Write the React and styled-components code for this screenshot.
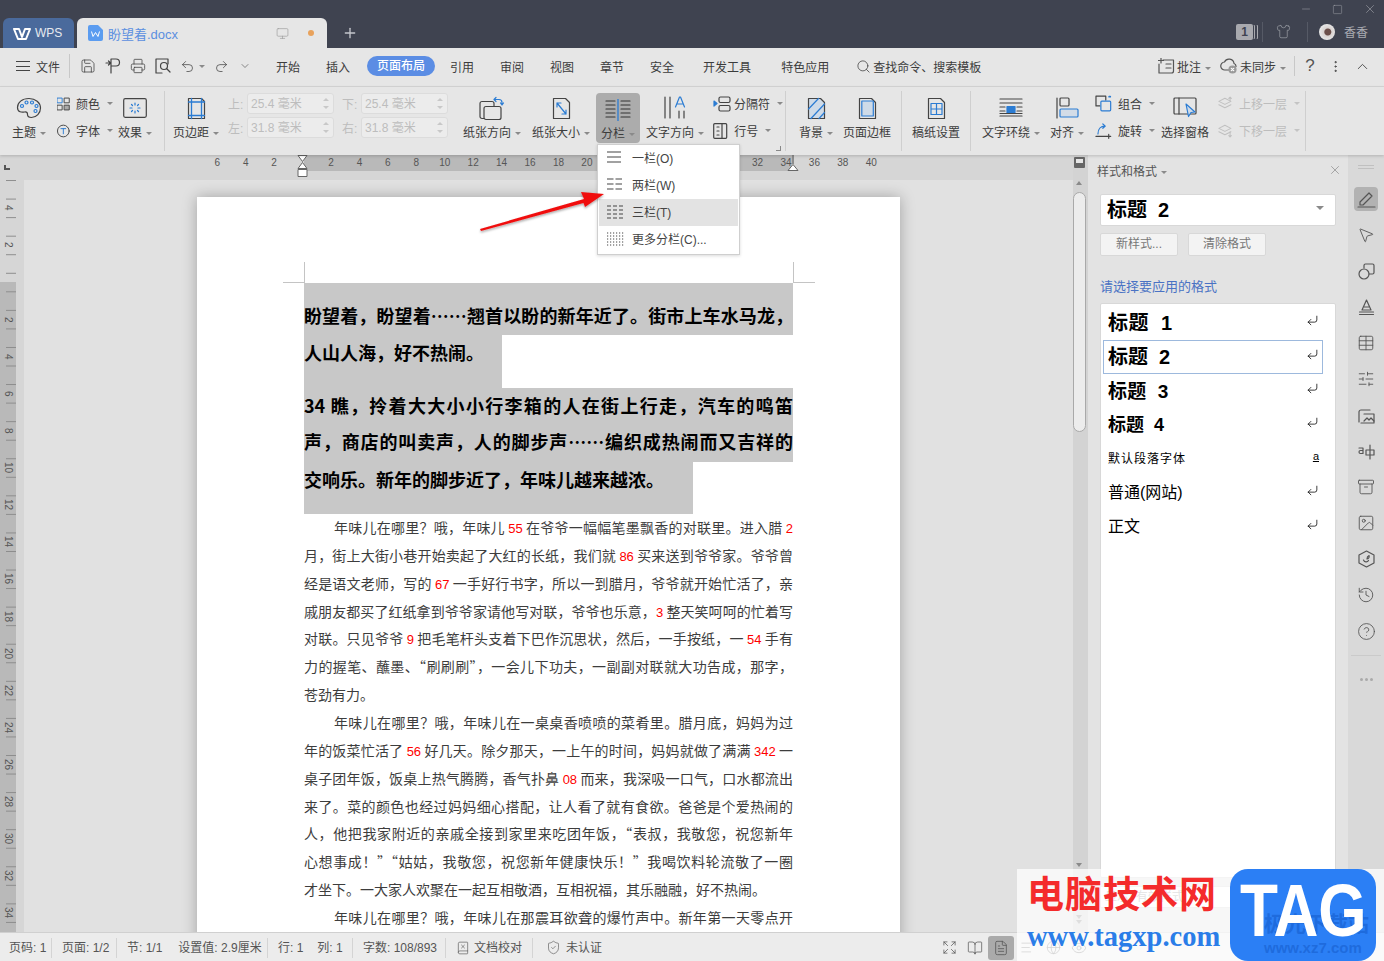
import React from 'react'
import styled, {createGlobalStyle} from 'styled-components'
import {
    Save, Printer, Undo2, Redo2, ChevronDown, ChevronUp, Search, MoreVertical, Minus, Square, X, Plus,
    Monitor, Shirt, HelpCircle, MousePointer2, Table, SlidersHorizontal, Archive, Image, History,
    Expand, BookOpen, FileText, AlignLeft, Globe, Eye, ShieldCheck, CornerDownLeft, BookX
} from 'lucide-react'

const FONT = '"Liberation Sans", "Noto Sans CJK SC", sans-serif'
const BLUE = '#2b7cd3'
const INK = '#3c3c3c'

const GlobalStyle = createGlobalStyle`
    html, body {
        margin: 0;
        padding: 0;
        width: 1384px;
        height: 961px;
        overflow: hidden;
        background: #e6e6e6;
    }
    body {
        font-family: ${FONT};
    }
    * {
        box-sizing: border-box;
    }
`

const Page = styled.div`
    position: relative;
    width: 1384px;
    height: 961px;
    display: flex;
    flex-direction: column;
    overflow: hidden;
    font-size: 12px;
    color: #333;
`

/* ---------- title bar ---------- */

const TitleBar = styled.div`
    height: 48px;
    flex: none;
    background: #3f4350;
    display: flex;
    align-items: flex-end;
    padding-left: 3px;
`

const WpsTab = styled.div`
    width: 71px;
    height: 30px;
    background: #4a6a9c;
    border-radius: 6px 6px 0 0;
    color: #e6e9ef;
    font-size: 12px;
    display: flex;
    align-items: center;
    gap: 4px;
    padding-left: 10px;
`

const DocTab = styled.div`
    width: 250px;
    height: 30px;
    margin-left: 3px;
    background: #e6e6e6;
    border-radius: 6px 6px 0 0;
    color: #5b8fe0;
    font-size: 13px;
    display: flex;
    align-items: center;
    padding-left: 11px;
    gap: 5px;
`

const TabName = styled.span`
    flex: 1;
`

const UnsavedDot = styled.i`
    width: 6px;
    height: 6px;
    border-radius: 50%;
    background: #e8a25c;
    margin: 0 13px 0 14px;
`

const NewTab = styled.div`
    width: 46px;
    height: 30px;
    display: flex;
    align-items: center;
    justify-content: center;
    color: #c4c6cc;
`

const TitleRight = styled.div`
    margin-left: auto;
    height: 48px;
    display: flex;
    flex-direction: column;
    align-items: flex-end;
    color: #a9abb2;
`

const WindowButtons = styled.div`
    display: flex;
    height: 18px;
    align-items: center;
    gap: 20px;
    padding-right: 7px;
`

const Account = styled.div`
    display: flex;
    align-items: center;
    height: 30px;
    padding: 0 16px 3px 0;
    font-size: 12px;
`

const CountBadge = styled.div`
    width: 17px;
    height: 16px;
    border-radius: 2px;
    background: #a8a9ae;
    color: #3f4350;
    font-weight: bold;
    font-size: 12px;
    text-align: center;
    line-height: 16px;
    margin-right: 1px;
    box-shadow: 2px 0 0 -1px #3f4350, 3px 0 0 -1px #a8a9ae, 5px 0 0 -1px #3f4350, 6px 0 0 -1px #a8a9ae;
`

const TitleSep = styled.i`
    width: 1px;
    height: 20px;
    background: #565a66;
    margin: ${p => p.$m};
`

const Avatar = styled.div`
    width: 16px;
    height: 16px;
    border-radius: 50%;
    background: radial-gradient(circle at 55% 50%, #6b4f4a 0 3px, #d8d2d0 4px, #e6e6e6 8px);
    margin-right: 9px;
`

/* ---------- menu bar ---------- */

const MenuBar = styled.div`
    height: 39px;
    flex: none;
    background: #e6e6e6;
    border-bottom: 1px solid #d6d6d6;
    display: flex;
    align-items: center;
    padding-bottom: 2px;
    color: ${INK};
`

const FileMenu = styled.div`
    display: flex;
    align-items: center;
    gap: 6px;
    width: 70px;
    padding-left: 16px;
    height: 24px;
    border-right: 1px solid #c8c8c8;
`

const Hamburger = styled.i`
    width: 14px;
    height: 10px;
    border-top: 1px solid #444;
    border-bottom: 1px solid #444;
    position: relative;
    &::after {
        content: '';
        position: absolute;
        left: 0;
        right: 0;
        top: 3.5px;
        height: 1px;
        background: #444;
    }
`

const QuickBar = styled.div`
    display: flex;
    align-items: center;
    width: 193px;
    padding-left: 10px;
`

const QuickButton = styled.span`
    width: ${p => p.$w || 25}px;
    display: flex;
    align-items: center;
    color: #444;
`

const MenuTab = styled.div`
    padding: 0 13px;
    margin-left: ${p => p.$ml || 0}px;
    white-space: nowrap;
`

const ActiveMenuTab = styled.div`
    width: 68px;
    height: 20px;
    line-height: 20px;
    margin: 0 2px 0 4px;
    text-align: center;
    border-radius: 10px;
    background: #5b8de4;
    color: #fff;
    font-weight: 500;
`

const SearchBox = styled.div`
    display: flex;
    align-items: center;
    gap: 2px;
    margin-left: 14px;
    white-space: nowrap;
`

const MenuRight = styled.div`
    margin-left: auto;
    display: flex;
    align-items: center;
    padding-right: 13px;
`

const MenuSep = styled.i`
    width: 1px;
    height: 20px;
    background: #c8c8c8;
    margin: 0 9px 0 8px;
`

const Caret = styled.i`
    display: inline-block;
    width: 0;
    height: 0;
    margin-left: 4px;
    vertical-align: middle;
    border-left: 3px solid transparent;
    border-right: 3px solid transparent;
    border-top: 3px solid ${p => (p.$faint ? '#c4c4c4' : '#8a8a8a')};
`

const BigCaret = styled(Caret)`
    border-left-width: 4px;
    border-right-width: 4px;
    border-top-width: 4px;
`

const HelpGlyph = styled.span`
    font-size: 17px;
    color: #555;
    width: 12px;
    text-align: center;
`

/* ---------- ribbon ---------- */

const Ribbon = styled.div`
    position: relative;
    z-index: 2;
    height: 68px;
    flex: none;
    background: #e6e6e6;
    display: flex;
    padding: 4px 0 0 8px;
    box-shadow: 0 1px 3px rgba(0, 0, 0, .18);
    color: ${INK};
`

const RibbonSep = styled.i`
    width: 1px;
    height: 60px;
    background: #cfcfcf;
    margin-left: ${p => p.$ml}px;
`

const BigButton = styled.div`
    position: relative;
    width: ${p => p.$w}px;
    height: ${p => (p.$active ? 50 : 56)}px;
    margin-left: ${p => p.$ml || 0}px;
    display: flex;
    flex-direction: column;
    align-items: center;
    white-space: nowrap;
    padding-top: 3px;
    margin-top: ${p => (p.$active ? 2 : 0)}px;
    border-radius: 4px;
    background: ${p => (p.$active ? '#acacac' : 'transparent')};
`

const BigIcon = styled.div`
    height: 28px;
    display: flex;
    align-items: center;
    justify-content: center;
`

const BigLabel = styled.div`
    margin-top: ${p => p.$mt ?? 1}px;
`

const SmallStack = styled.div`
    width: ${p => p.$w}px;
    margin-left: ${p => p.$ml}px;
    display: flex;
    flex-direction: column;
    gap: 8px;
    padding-top: 3px;
`

const SmallButton = styled.div`
    height: 19px;
    display: flex;
    align-items: center;
    gap: 3px;
    white-space: nowrap;
    color: ${p => (p.$faint ? '#bdbdbd' : 'inherit')};
`

const MarginGrid = styled.div`
    margin-left: 10px;
    width: 220px;
    display: grid;
    grid-template-columns: 19px 95px 19px 87px;
    row-gap: 3px;
    grid-auto-rows: 21px;
    margin-top: 2px;
    color: #bdbdbd;
    align-items: center;
`

const MarginField = styled.div`
    position: relative;
    height: 21px;
    line-height: 20px;
    padding-left: 3px;
    border: 1px solid #dcdcdc;
    border-radius: 3px;
    background: #ececec;
    width: 87px;
    &::before, &::after {
        content: '';
        position: absolute;
        right: 4px;
        border-left: 3px solid transparent;
        border-right: 3px solid transparent;
    }
    &::before {
        top: 4px;
        border-bottom: 3px solid #c8c8c8;
    }
    &::after {
        bottom: 4px;
        border-top: 3px solid #c8c8c8;
    }
`

const MarginLabel = styled.span`
    font-size: 12px;
`

const CornerMark = styled.i`
    position: absolute;
    left: 776px;
    bottom: 4px;
    width: 5px;
    height: 5px;
    border-right: 1px solid #888;
    border-bottom: 1px solid #888;
`

/* ---------- drop down ---------- */

const Dropdown = styled.div`
    position: absolute;
    z-index: 5;
    top: 100%;
    left: 1px;
    margin-top: 1px;
    width: 143px;
    height: 111px;
    padding: 0 1px;
    background: #fff;
    border: 1px solid #cfcfcf;
    box-shadow: 0 1px 3px rgba(0, 0, 0, .15);
`

const DropdownItem = styled.div`
    height: 27px;
    display: flex;
    align-items: center;
    padding: 0 0 2px 8px;
    gap: 8px;
    background: ${p => (p.$hover ? '#e3e3e3' : 'transparent')};
    color: #444;
`

const Arrow = styled.svg`
    position: absolute;
    z-index: 6;
    left: 470px;
    top: 185px;
    pointer-events: none;
`

/* ---------- workspace ---------- */

const Workspace = styled.div`
    flex: 1;
    min-height: 0;
    display: flex;
`

const Editor = styled.div`
    width: 1073px;
    display: flex;
    flex-direction: column;
`

const TopRuler = styled.div`
    height: 25px;
    flex: none;
    padding-left: 203px;
    display: flex;
    position: relative;
    background:
        linear-gradient(to right, transparent 304px, #b9b9b9 304px, #b9b9b9 792px, transparent 792px) 0 0 / 100% 16px no-repeat,
        #d6d6d6;
`

const RulerNumber = styled.span`
    width: 28.45px;
    flex: none;
    height: 16px;
    line-height: 15px;
    text-align: center;
    font-size: 10px;
    color: #555;
`

const TabStop = styled.i`
    position: absolute;
    left: 4px;
    top: 10px;
    width: 6px;
    height: 5px;
    border-left: 2px solid #555;
    border-bottom: 2px solid #555;
`

const IndentMark = styled.svg`
    position: absolute;
    left: ${p => p.$x}px;
    top: 0;
`

const EditorBody = styled.div`
    flex: 1;
    min-height: 0;
    display: flex;
`

const SideRuler = styled.div`
    width: 24px;
    flex: none;
    display: flex;
    flex-direction: column;
    padding-top: 9.5px;
    overflow: hidden;
    background:
        linear-gradient(#8c8c8c 1px, transparent 1px) 6px 18.6px / 10px 18.55px repeat-y,
        linear-gradient(to bottom, #d6d6d6 102px, #b9b9b9 102px) 0 0 / 16px 100% no-repeat,
        #d6d6d6;
`

const SideNumber = styled.span`
    height: 37.1px;
    flex: none;
    width: 16px;
    writing-mode: vertical-rl;
    text-align: center;
    line-height: 16px;
    font-size: 10px;
    color: #555;
`

const Canvas = styled.div`
    flex: 1;
    min-width: 0;
    overflow: hidden;
    background: #e1e1e1;
    padding: 17px 0 0 173px;
`

const Sheet = styled.div`
    position: relative;
    width: 703px;
    min-height: 900px;
    background: #fff;
    padding: 86px 107px 0;
    box-shadow: 0 0 14px rgba(0, 0, 0, .28);
    font-family: "Noto Sans CJK SC", "Liberation Sans", sans-serif;
`

const CropMark = styled.i`
    position: absolute;
    top: ${p => p.$t}px;
    left: ${p => p.$l}px;
    width: ${p => p.$w}px;
    height: ${p => p.$h}px;
    background: #c4c4c4;
`

const HeadLine = styled.div`
    height: ${p => p.$h}px;
    padding-top: ${p => p.$pt || 0}px;
    width: ${p => p.$w || 489}px;
    background: #c8c8c8;
    font-size: 18px;
    font-weight: bold;
    color: #000;
    line-height: 35px;
    white-space: nowrap;
    overflow: hidden;
    text-align-last: ${p => (p.$w ? 'left' : 'justify')};
`

const BodyLine = styled.div`
    height: 27.87px;
    line-height: 27px;
    font-size: 14px;
    color: #3d3d3d;
    white-space: nowrap;
    overflow: hidden;
    padding-left: ${p => (p.$first ? 30 : 0)}px;
    text-align-last: ${p => (p.$end ? 'left' : 'justify')};
`

const RedNum = styled.span`
    color: #f00;
    font-family: "Liberation Sans", sans-serif;
    font-size: 13px;
`

const ScrollCol = styled.div`
    width: 15px;
    flex: none;
    background: #d3d3d3;
    display: flex;
    flex-direction: column;
    align-items: center;
    padding-top: 2px;
    color: #777;
`

const ScrollTop = styled.div`
    width: 11px;
    height: 11px;
    margin-right: 3px;
    border-radius: 1px;
    background: #666;
    position: relative;
    &::after {
        content: '';
        position: absolute;
        left: 2px;
        top: 2px;
        width: 7px;
        height: 4px;
        background: #e6e6e6;
    }
`

const ScrollArrow = styled.i`
    width: 0;
    height: 0;
    margin: ${p => p.$m};
    border-left: 3.5px solid transparent;
    border-right: 3.5px solid transparent;
    border-bottom: ${p => (p.$up ? '4px solid #8a8a8a' : 'none')};
    border-top: ${p => (p.$up ? 'none' : '4px solid #8a8a8a')};
`

const ScrollThumb = styled.div`
    width: 13px;
    height: 240px;
    margin: 7px 3px 0 0;
    border: 1px solid #a9a9a9;
    border-radius: 7px;
    background: #ececec;
`

/* ---------- styles panel ---------- */

const Panel = styled.div`
    width: 260px;
    flex: none;
    background: #e3e3e3;
    padding: 0 12px;
    display: flex;
    flex-direction: column;
`

const PanelHead = styled.div`
    height: 30px;
    margin: 0 -3px;
    display: flex;
    align-items: center;
    justify-content: space-between;
    color: #555;
`

const PanelClose = styled(X)`
    margin-right: -3px;
    color: #777;
`

const StyleSelect = styled.div`
    margin-top: 9px;
    height: 32px;
    background: #fff;
    border: 1px solid #d8d8d8;
    border-radius: 2px;
    display: flex;
    align-items: center;
    justify-content: space-between;
    padding: 0 11px 4px 6px;
`

const StyleName = styled.span`
    font-weight: ${p => (p.$plain ? 400 : 'bold')};
    font-size: ${p => p.$size}px;
    color: #000;
    white-space: pre;
    letter-spacing: ${p => p.$ls || 0}px;
`

const PanelButtons = styled.div`
    display: flex;
    gap: 10px;
    margin-top: 7px;
`

const PanelButton = styled.div`
    width: 78px;
    height: 23px;
    line-height: 21px;
    text-align: center;
    background: #f3f3f3;
    border: 1px solid #d8d8d8;
    border-radius: 2px;
    color: #777;
`

const PanelLabel = styled.div`
    margin-top: 22px;
    height: 18px;
    line-height: 18px;
    font-size: 13px;
    color: #4a72c4;
`

const StyleList = styled.div`
    margin-top: 7px;
    height: 575px;
    background: #fff;
    border: 1px solid #d8d8d8;
    border-radius: 2px;
    padding: 2px 12px 0 2px;
`

const StyleRow = styled.div`
    height: 34px;
    display: flex;
    align-items: center;
    justify-content: space-between;
    padding: 0 3px 4px 4px;
    border: 1px solid ${p => (p.$selected ? '#9db9dd' : 'transparent')};
`

const EnterMark = styled.span`
    display: flex;
    margin-bottom: 2px;
    color: #000;
`

const CharMark = styled.u`
    font-size: 11px;
`

const FilterSelect = styled.div`
    margin-top: 8px;
    height: 22px;
    line-height: 21px;
    background: #fff;
    border: 1px solid #d8d8d8;
    padding-left: 4px;
    color: #999;
`

const Rail = styled.div`
    width: 36px;
    flex: none;
    background: #d9d9d9;
    display: flex;
    flex-direction: column;
    align-items: center;
    color: #555;
    padding-top: 10px;
`

const RailGrip = styled.i`
    width: 16px;
    height: 4px;
    border-top: 1px solid #c0c0c0;
    border-bottom: 1px solid #c0c0c0;
    margin-bottom: 18px;
`

const RailButton = styled.div`
    width: 24px;
    height: 24px;
    flex: none;
    margin-bottom: 12px;
    border-radius: 4px;
    display: flex;
    align-items: center;
    justify-content: center;
    background: ${p => (p.$active ? '#b2b2b2' : 'transparent')};
`

const RailSep = styled.i`
    width: 30px;
    height: 1px;
    background: #cacaca;
    margin-bottom: 22px;
`

const RailDots = styled.div`
    display: flex;
    gap: 2px;
    & i {
        width: 3px;
        height: 3px;
        border-radius: 50%;
        background: #aaa;
    }
`

/* ---------- status bar ---------- */

const StatusBar = styled.div`
    height: 29px;
    flex: none;
    background: #ececec;
    border-top: 1px solid #d0d0d0;
    display: flex;
    align-items: center;
    padding-top: 1px;
    color: #555;
    font-size: 12px;
`

const StatusItem = styled.div`
    width: ${p => p.$w}px;
    height: 20px;
    line-height: 20px;
    padding-left: ${p => p.$pl ?? 10}px;
    border-right: 1px solid ${p => (p.$bare ? 'transparent' : '#d4d4d4')};
    white-space: nowrap;
    display: flex;
    gap: ${p => p.$gap || 0}px;
    align-items: center;
`

const ViewButtons = styled.div`
    margin-left: auto;
    display: flex;
    align-items: center;
    color: #555;
    padding-right: 292px;
`

const ViewButton = styled.div`
    width: 26px;
    height: 24px;
    display: flex;
    align-items: center;
    justify-content: center;
    border-radius: 3px;
    background: ${p => (p.$active ? '#aaa' : 'transparent')};
`

/* ---------- watermark ---------- */

const Watermark = styled.div`
    position: absolute;
    z-index: 8;
    left: 1017px;
    top: 869px;
    width: 367px;
    height: 92px;
    background: rgba(255, 255, 255, .72);
    display: flex;
`

const WatermarkText = styled.div`
    width: 213px;
    padding: 6px 0 0 10px;
    white-space: nowrap;
`

const WatermarkTitle = styled.div`
    height: 41px;
    line-height: 41px;
    font-size: 37px;
    font-weight: bold;
    letter-spacing: 1px;
    color: #f42b2b;
`

const WatermarkUrl = styled.div`
    margin-top: 6px;
    font-family: "Liberation Serif", serif;
    font-size: 28.5px;
    line-height: 30px;
    font-weight: bold;
    color: #2a7de8;
`

const TagBadge = styled.div`
    position: relative;
    width: 146px;
    height: 92px;
    border-radius: 18px;
    background: #2b7ff5;
    overflow: hidden;
    display: flex;
    justify-content: center;
`

const TagWord = styled.span`
    position: relative;
    display: inline-block;
    color: #fff;
    font-size: 74px;
    line-height: 84px;
    font-weight: bold;
    transform: scaleX(.84);
`

const TagGhost = styled.span`
    position: absolute;
    left: 34px;
    top: ${p => p.$t}px;
    font-size: ${p => p.$size}px;
    line-height: 24px;
    white-space: nowrap;
    font-weight: bold;
    color: rgba(20, 90, 200, .55);
`

/* ---------- small drawings ---------- */

const Ico = ({w = 26, h = 26, view, sw = 1.2, children}) => (
    <svg width={w} height={h} viewBox={view || `0 0 ${w} ${h}`} fill="none" stroke="#444" strokeWidth={sw} strokeLinecap="round" strokeLinejoin="round">
        {children}
    </svg>
)

const PaletteIcon = () => (
    <Ico w={26} h={22}>
        <path d="M13 1.500C6 1.500 1.500 5.500 1.500 10.500c0 5 4.500 5 7 4.500 2.500-.5 3 1 3 2.500s1.500 3 4 3c5 0 9-4.500 9-9.500 0-5.500-5-9.500-11.500-9.500z" />
        <g stroke={BLUE}>
            <circle cx="6" cy="9" r="1.500" /><circle cx="10.500" cy="5.500" r="1.500" />
            <circle cx="16" cy="5.500" r="1.500" /><circle cx="20.500" cy="9" r="1.500" /><circle cx="19.500" cy="14" r="1.500" />
        </g>
    </Ico>
)

const ColorsIcon = () => (
    <Ico w={16} h={16}>
        <rect x=".5" y=".5" width="6" height="6" stroke={BLUE} /><rect x="9.500" y=".5" width="6" height="6" />
        <rect x=".5" y="9.500" width="6" height="6" /><rect x="9.500" y="9.500" width="6" height="6" fill="#aaa" />
    </Ico>
)

const FontIcon = () => (
    <Ico w={16} h={16}>
        <circle cx="8" cy="8" r="7.400" />
        <path d="M5 5h6M8 5v6.500" stroke={BLUE} />
    </Ico>
)

const EffectsIcon = () => (
    <Ico w={24} h={20}>
        <rect x=".7" y=".7" width="22.600" height="18.600" rx="1.500" />
        <path d="M12 5v2M12 13v2M7 10h2M15 10h2M8.500 6.500l1 1M14.500 12.500l1 1M15.500 6.500l-1 1M9.500 12.500l-1 1" stroke={BLUE} />
    </Ico>
)

const MarginsIcon = () => (
    <Ico w={19} h={23}>
        <path d="M1.500 1.500h13l3 3v17h-16z" />
        <path d="M1.500 5h16M1.500 18.500h16M4.500 1.500v20M14.500 1.500v20" stroke={BLUE} strokeWidth="1.300" />
    </Ico>
)

const OrientIcon = () => (
    <Ico w={26} h={25}>
        <rect x="1" y="5.500" width="14" height="17" rx="2" />
        <rect x="5" y="10.500" width="17" height="13" rx="2" fill="#e6e6e6" />
        <path d="M15 3.500h5c2 0 3 1 3 3v2M21.500 7l1.500 2 1.500-2M17 1.500l-2 2 2 2" stroke={BLUE} />
    </Ico>
)

const SizeIcon = () => (
    <Ico w={19} h={23}>
        <path d="M1.500 1.500h12l4 4v16h-16z" />
        <path d="M5 6l9 11M5 10V6h4M14 13v4h-4" stroke={BLUE} />
    </Ico>
)

const ColumnsIcon = () => (
    <Ico w={26} h={22}>
        <path d="M1 2h9M1 6h9M1 10h9M1 14h9M1 18h9M16 2h9M16 6h9M16 10h9M16 14h9M16 18h9" stroke="#333" />
        <path d="M13 0v22" stroke={BLUE} strokeWidth="1.300" />
    </Ico>
)

const TextDirIcon = () => (
    <Ico w={24} h={24}>
        <path d="M2 1v21M7 1v21M16 15v7M21 15v7" />
        <path d="M12.500 11L16.500 1h1l4 10M14 8h6" stroke={BLUE} />
    </Ico>
)

const BreaksIcon = () => (
    <Ico w={18} h={16}>
        <path d="M1 5l3 2.500L1 10z" fill={BLUE} stroke={BLUE} />
        <rect x="6" y="1" width="11" height="5.500" rx="1.500" /><rect x="6" y="9.500" width="11" height="5.500" rx="1.500" />
    </Ico>
)

const LineNoIcon = () => (
    <Ico w={15} h={16}>
        <rect x=".7" y=".7" width="13" height="14.600" rx="1" />
        <path d="M9 .7v14.600M4 4h2M4 8h2M4 12h2" />
    </Ico>
)

const BackgroundIcon = () => (
    <Ico w={19} h={23}>
        <path d="M1.500 1.500h12l4 4v16h-16z" fill="#cfdbe8" />
        <path d="M1.500 12l10-10.500M4 21.500L17.500 7M12 21.500l5.500-6" stroke={BLUE} />
    </Ico>
)

const BorderIcon = () => (
    <Ico w={19} h={23}>
        <path d="M1.500 1.500h12l4 4v16h-16z" />
        <rect x="3.800" y="4" width="11.500" height="15" fill="#cfdbe8" stroke={BLUE} />
    </Ico>
)

const GridPaperIcon = () => (
    <Ico w={19} h={23}>
        <path d="M1.500 1.500h12l4 4v16h-16z" />
        <path d="M4 6.500h11v11H4zM4 12h11M9.500 6.500v11" stroke={BLUE} />
    </Ico>
)

const WrapIcon = () => (
    <Ico w={24} h={20}>
        <path d="M1 1h22M1 5h22M1 9h5M18 9h5M1 13h5M18 13h5M1 18h22M1 15.500h22" />
        <path d="M8 8.500h8v6H8z" fill={BLUE} stroke={BLUE} />
    </Ico>
)

const AlignIcon = () => (
    <Ico w={23} h={22}>
        <path d="M1 1v20" />
        <rect x="4" y="1" width="9" height="8" rx="1" />
        <rect x="4" y="12" width="18" height="8" rx="1" fill="#d3dce7" stroke={BLUE} />
    </Ico>
)

const GroupIcon = () => (
    <Ico w={17} h={17}>
        <path d="M5 11H1V1h10v4" />
        <rect x="6" y="6" width="10" height="10" rx="1" stroke={BLUE} />
        <path d="M14.500 1.500h1" stroke={BLUE} strokeWidth="2" />
    </Ico>
)

const RotateIcon = () => (
    <Ico w={17} h={16}>
        <path d="M3 11C3 6 6 3 10 3M8 .8L10.500 3 8 5.200" stroke={BLUE} />
        <path d="M1 13.500h15M14 11.500v4" />
    </Ico>
)

const PaneIcon = () => (
    <Ico w={24} h={24}>
        <rect x="1" y="2" width="22" height="16" rx="1" />
        <path d="M6 2v16" />
        <path d="M13 8l9 8-4 .5-2.500 4z" fill="#cfdbe8" stroke={BLUE} />
    </Ico>
)

const LayersIcon = ({down}) => (
    <Ico w={17} h={17}>
        <g stroke="#c0c0c0">
            <path d="M1 6l7-3.500L15 6 8 9.500zM1 10l7 3.500 7-3.500" />
            <path d={down ? 'M14 10v6M12.500 14.500L14 16l1.500-1.500' : 'M14 1v4M12.500 2.500L14 1l1.500 1.500'} />
        </g>
    </Ico>
)

const ColumnGlyph = ({cols}) => {
    const gap = 2
    const total = cols === 1 ? 14 : cols === 2 ? 15 : 16
    const width = (total - gap * (cols - 1)) / cols
    const rows = cols === 3 ? [1, 5, 9, 13] : [1, 6, 11]
    return (
        <svg width="17" height="14" viewBox="0 0 17 14">
            {rows.map(y => Array.from({length: cols}).map((_, i) => (
                <rect key={`${y}-${i}`} x={i * (width + gap)} y={y - .5} width={width} height="1" fill="#444" />
            )))}
        </svg>
    )
}

const DottedGlyph = () => (
    <svg width="17" height="14" viewBox="0 0 17 14">
        {[1, 4, 7, 10, 13].map(y => [0, 3, 6, 9, 12, 15].map(x => (
            <rect key={`${x}-${y}`} x={x} y={y - .5} width="1.200" height="1" fill="#444" />
        )))}
    </svg>
)

const WpsLogo = () => (
    <svg width="18" height="14" viewBox="0 0 18 14" fill="none" stroke="#fff" strokeWidth="2" strokeLinejoin="round">
        <path d="M1 3h5l3 8 3-8h5l-4 10H5z" />
    </svg>
)

const DocGlyph = () => (
    <svg width="15" height="16" viewBox="0 0 15 16">
        <path d="M2 0h8l5 5v9a2 2 0 0 1-2 2H2a2 2 0 0 1-2-2V2a2 2 0 0 1 2-2z" fill="#5b9cf0" />
        <path d="M3.500 6.500l1.500 5 2.500-4 2.500 4 1.500-5" fill="none" stroke="#fff" />
    </svg>
)

const FormatPainter = () => (
    <Ico w={16} h={16}>
        <path d="M6 1h5a3 3 0 0 1 0 7H6zM6 8v7M1 5h4M3.500 3l2 2-2 2" stroke="#444" />
    </Ico>
)

const PreviewIcon = () => (
    <Ico w={16} h={16}>
        <path d="M13 6V1H1v14h6" stroke="#444" />
        <circle cx="9" cy="8" r="3.500" stroke="#444" />
        <path d="M11.500 10.500L15 14" stroke="#444" />
    </Ico>
)

const CommentIcon = () => (
    <Ico w={17} h={16}>
        <path d="M5 2h10.500v11a2 2 0 0 1-2 2H1V6M8 6h5M8 10h5M0.500 2.500h5M3 0v5" stroke="#555" />
    </Ico>
)

const CloudIcon = () => (
    <Ico w={17} h={16}>
        <path d="M11 12H5a4 4 0 0 1-.5-8 5 5 0 0 1 9.500 1.500 3 3 0 0 1 2 3" stroke="#555" />
        <circle cx="12.500" cy="11.500" r="3.500" fill="#999" stroke="#999" />
        <path d="M11.300 10.300l2.400 2.400M13.700 10.300l-2.400 2.400" stroke="#fff" />
    </Ico>
)

const HighlightIcon = () => (
    <Ico w={19} h={17}>
        <path d="M3 11L12 2l3 3-9 9H3zM1 16h17" stroke="#555" />
    </Ico>
)

const ShapesIcon = () => (
    <Ico w={17} h={17}>
        <path d="M6 5V2.500A1.500 1.500 0 0 1 7.500 1h7A1.500 1.500 0 0 1 16 2.500v7a1.500 1.500 0 0 1-1.500 1.500H11" stroke="#555" />
        <circle cx="6" cy="11" r="5" stroke="#555" />
    </Ico>
)

const TextFillIcon = () => (
    <Ico w={17} h={17}>
        <path d="M4 11L8.500 1 13 11zM6.500 8h4M1.500 13h14M1.500 15.500h14" stroke="#555" />
    </Ico>
)

const TranslateIcon = () => (
    <Ico w={17} h={17}>
        <path d="M1 5h4v5.500H2.500a1.500 1.500 0 0 1 0-3H5M8 7h8v5H8zM12 2v14" stroke="#555" />
    </Ico>
)

const PicFolderIcon = () => (
    <Ico w={17} h={17}>
        <path d="M1 15V5a2 2 0 0 1 2-2h9M6 7h10v9H3" stroke="#555" />
        <path d="M6 14l3-3 2 2 2-2 3 3" stroke="#555" />
    </Ico>
)

const BadgeLeafIcon = () => (
    <Ico w={17} h={18}>
        <path d="M8.500 1L16 5v8l-7.500 4L1 13V5z" stroke="#555" />
        <path d="M5.500 10c1 2.500 4 2.500 5 .5M9 9c0-2 .5-3 2-3.500.5 1.800-.2 3-2 3.500z" stroke="#555" />
    </Ico>
)

/* ---------- data ---------- */

const RULER = [6, 4, 2, '', 2, 4, 6, 8, 10, 12, 14, 16, 18, 20, 22, 24, 26, 28, 30, 32, 34, 36, 38, 40]
const SIDE = [4, 2, '', 2, 4, 6, 8, 10, 12, 14, 16, 18, 20, 22, 24, 26, 28, 30, 32, 34]

const BODY = [
    {t: '年味儿在哪里？哦，年味儿 55 在爷爷一幅幅笔墨飘香的对联里。进入腊 2', first: true},
    {t: '月，街上大街小巷开始卖起了大红的长纸，我们就 86 买来送到爷爷家。爷爷曾'},
    {t: '经是语文老师，写的 67 一手好行书字，所以一到腊月，爷爷就开始忙活了，亲'},
    {t: '戚朋友都买了红纸拿到爷爷家请他写对联，爷爷也乐意，3 整天笑呵呵的忙着写'},
    {t: '对联。只见爷爷 9 把毛笔杆头支着下巴作沉思状，然后，一手按纸，一 54 手有'},
    {t: '力的握笔、蘸墨、“刷刷刷”，一会儿下功夫，一副副对联就大功告成，那字，'},
    {t: '苍劲有力。', end: true},
    {t: '年味儿在哪里？哦，年味儿在一桌桌香喷喷的菜肴里。腊月底，妈妈为过', first: true},
    {t: '年的饭菜忙活了 56 好几天。除夕那天，一上午的时间，妈妈就做了满满 342 一'},
    {t: '桌子团年饭，饭桌上热气腾腾，香气扑鼻 08 而来，我深吸一口气，口水都流出'},
    {t: '来了。菜的颜色也经过妈妈细心搭配，让人看了就有食欲。爸爸是个爱热闹的'},
    {t: '人，他把我家附近的亲戚全接到家里来吃团年饭，“表叔，我敬您，祝您新年'},
    {t: '心想事成！”“姑姑，我敬您，祝您新年健康快乐！”我喝饮料轮流敬了一圈'},
    {t: '才坐下。一大家人欢聚在一起互相敬酒，互相祝福，其乐融融，好不热闹。', end: true},
    {t: '年味儿在哪里？哦，年味儿在那震耳欲聋的爆竹声中。新年第一天零点开', first: true},
]

const STYLES = [
    {name: '标题  1', size: 20, ls: .5},
    {name: '标题  2', size: 20, selected: true},
    {name: '标题  3', size: 19, ls: .3},
    {name: '标题  4', size: 18},
    {name: '默认段落字体', size: 12, plain: true, ls: 1, char: true},
    {name: '普通(网站)', size: 16, plain: true},
    {name: '正文', size: 16, plain: true},
]

const RAIL_ICONS = [
    <MousePointer2 size={18} strokeWidth={1.2} />,
    <ShapesIcon />,
    <TextFillIcon />,
    <Table size={18} strokeWidth={1.2} />,
    <SlidersHorizontal size={18} strokeWidth={1.2} />,
    <PicFolderIcon />,
    <TranslateIcon />,
    <Archive size={18} strokeWidth={1.2} />,
    <Image size={18} strokeWidth={1.2} />,
    <BadgeLeafIcon />,
    <History size={18} strokeWidth={1.2} />,
    <HelpCircle size={19} strokeWidth={1.1} />,
]

const withRed = (text) => text.split(/(\d+)/).map((part, i) => (i % 2 ? <RedNum key={i}>{part}</RedNum> : part))

const Big = ({w, ml, icon, label, faintCaret, mt, caret = true, active, children}) => (
    <BigButton $w={w} $ml={ml} $active={active}>
        <BigIcon>{icon}</BigIcon>
        <BigLabel $mt={mt}>{label}{caret && <Caret $faint={faintCaret} />}</BigLabel>
        {children}
    </BigButton>
)

const App = () => {
    return (
        <Page>
            <GlobalStyle />
            <TitleBar>
                <WpsTab><WpsLogo />WPS</WpsTab>
                <DocTab>
                    <DocGlyph />
                    <TabName>盼望着.docx</TabName>
                    <Monitor size={13} color="#9a9a9a" strokeWidth={1.2} />
                    <UnsavedDot />
                </DocTab>
                <NewTab><Plus size={16} /></NewTab>
                <TitleRight>
                    <WindowButtons>
                        <Minus size={12} strokeWidth={1} />
                        <Square size={11} strokeWidth={1} />
                        <X size={14} strokeWidth={1} />
                    </WindowButtons>
                    <Account>
                        <CountBadge>1</CountBadge>
                        <TitleSep $m="0 13px 0 8px" />
                        <Shirt size={15} strokeWidth={1} />
                        <TitleSep $m="0 11px 0 16px" />
                        <Avatar />
                        香香
                    </Account>
                </TitleRight>
            </TitleBar>

            <MenuBar>
                <FileMenu><Hamburger />文件</FileMenu>
                <QuickBar>
                    <QuickButton><Save size={16} strokeWidth={1.2} /></QuickButton>
                    <QuickButton><FormatPainter /></QuickButton>
                    <QuickButton><Printer size={16} strokeWidth={1.2} /></QuickButton>
                    <QuickButton><PreviewIcon /></QuickButton>
                    <QuickButton $w={34}><Undo2 size={15} strokeWidth={1.2} /><Caret /></QuickButton>
                    <QuickButton><Redo2 size={15} strokeWidth={1.2} /></QuickButton>
                    <QuickButton $w={14}><ChevronDown size={12} strokeWidth={1.2} /></QuickButton>
                </QuickBar>
                <MenuTab>开始</MenuTab>
                <MenuTab>插入</MenuTab>
                <ActiveMenuTab>页面布局</ActiveMenuTab>
                <MenuTab>引用</MenuTab>
                <MenuTab>审阅</MenuTab>
                <MenuTab>视图</MenuTab>
                <MenuTab>章节</MenuTab>
                <MenuTab>安全</MenuTab>
                <MenuTab $ml={3}>开发工具</MenuTab>
                <MenuTab $ml={4}>特色应用</MenuTab>
                <SearchBox><Search size={15} strokeWidth={1.2} />查找命令、搜索模板</SearchBox>
                <MenuRight>
                    <CommentIcon />
                    <span style={{marginLeft: 2}}>批注<Caret /></span>
                    <span style={{width: 9}} />
                    <CloudIcon />
                    <span style={{marginLeft: 3}}>未同步<Caret /></span>
                    <MenuSep />
                    <HelpGlyph>?</HelpGlyph>
                    <MoreVertical size={15} strokeWidth={1.4} style={{margin: '0 11px 0 12px'}} />
                    <ChevronUp size={17} strokeWidth={1.2} />
                </MenuRight>
            </MenuBar>

            <Ribbon>
                <Big w={42} icon={<PaletteIcon />} label="主题" />
                <SmallStack $w={56} $ml={7}>
                    <SmallButton><ColorsIcon />&nbsp;颜色<Caret /></SmallButton>
                    <SmallButton><FontIcon />&nbsp;字体<Caret /></SmallButton>
                </SmallStack>
                <Big w={44} icon={<EffectsIcon />} label="效果" />
                <RibbonSep $ml={7} />
                <Big w={44} ml={9} icon={<MarginsIcon />} label="页边距" />
                <MarginGrid>
                    <MarginLabel>上:</MarginLabel><MarginField>25.4 毫米</MarginField>
                    <MarginLabel>下:</MarginLabel><MarginField>25.4 毫米</MarginField>
                    <MarginLabel>左:</MarginLabel><MarginField>31.8 毫米</MarginField>
                    <MarginLabel>右:</MarginLabel><MarginField>31.8 毫米</MarginField>
                </MarginGrid>
                <Big w={58} ml={15} icon={<OrientIcon />} label="纸张方向" />
                <Big w={58} ml={11} icon={<SizeIcon />} label="纸张大小" />
                <Big w={44} ml={6} active icon={<ColumnsIcon />} label="分栏" mt={0}>
                    <Dropdown>
                        <DropdownItem><ColumnGlyph cols={1} />一栏(O)</DropdownItem>
                        <DropdownItem><ColumnGlyph cols={2} />两栏(W)</DropdownItem>
                        <DropdownItem $hover><ColumnGlyph cols={3} />三栏(T)</DropdownItem>
                        <DropdownItem><DottedGlyph />更多分栏(C)...</DropdownItem>
                    </Dropdown>
                </Big>
                <Big w={58} ml={6} icon={<TextDirIcon />} label="文字方向" />
                <SmallStack $w={70} $ml={9}>
                    <SmallButton><BreaksIcon />分隔符<Caret /></SmallButton>
                    <SmallButton><LineNoIcon />&nbsp;行号<Caret /></SmallButton>
                    <CornerMark />
                </SmallStack>
                <RibbonSep $ml={2} />
                <Big w={40} ml={10} icon={<BackgroundIcon />} label="背景" />
                <Big w={58} ml={2} caret={false} icon={<BorderIcon />} label="页面边框" />
                <RibbonSep $ml={5} />
                <Big w={58} ml={5} caret={false} icon={<GridPaperIcon />} label="稿纸设置" />
                <RibbonSep $ml={5} />
                <Big w={62} ml={9} icon={<WrapIcon />} label="文字环绕" />
                <Big w={40} ml={5} icon={<AlignIcon />} label="对齐" />
                <SmallStack $w={60} $ml={8}>
                    <SmallButton><GroupIcon />&nbsp;组合<Caret /></SmallButton>
                    <SmallButton><RotateIcon />&nbsp;旋转<Caret /></SmallButton>
                </SmallStack>
                <Big w={56} ml={2} caret={false} icon={<PaneIcon />} label="选择窗格" />
                <SmallStack $w={82} $ml={5}>
                    <SmallButton $faint><LayersIcon />&nbsp;上移一层<Caret $faint /></SmallButton>
                    <SmallButton $faint><LayersIcon down />&nbsp;下移一层<Caret $faint /></SmallButton>
                </SmallStack>
                <RibbonSep $ml={5} />
            </Ribbon>

            <Workspace>
                <Editor>
                    <TopRuler>
                        <TabStop />
                        {RULER.map((n, i) => <RulerNumber key={i}>{n}</RulerNumber>)}
                        <IndentMark $x={297} width="12" height="22" viewBox="0 0 12 22">
                            <path d="M1 .5h9L5.500 6.500zM1 13.500L5.500 7.500l4.500 6zM1 14.500h9v7H1z" fill="#fff" stroke="#666" />
                        </IndentMark>
                        <IndentMark $x={787} width="12" height="16" viewBox="0 0 12 16">
                            <path d="M1 15.500L6 9.500l5 6z" fill="#fff" stroke="#666" />
                            <path d="M6 0v9" stroke="#444" />
                        </IndentMark>
                    </TopRuler>
                    <EditorBody>
                        <SideRuler>
                            {SIDE.map((n, i) => <SideNumber key={i}>{n}</SideNumber>)}
                        </SideRuler>
                        <Canvas>
                            <Sheet>
                                <CropMark $t={65} $l={107} $w={1} $h={21} />
                                <CropMark $t={85} $l={86} $w={21} $h={1} />
                                <CropMark $t={65} $l={596} $w={1} $h={21} />
                                <CropMark $t={85} $l={597} $w={21} $h={1} />
                                <HeadLine $h={52} $pt={15}>盼望着，盼望着……翘首以盼的新年近了。街市上车水马龙，</HeadLine>
                                <HeadLine $h={53} $w={198}>人山人海，好不热闹。</HeadLine>
                                <HeadLine $h={36}>34 瞧，拎着大大小小行李箱的人在街上行走，汽车的鸣笛</HeadLine>
                                <HeadLine $h={38}>声，商店的叫卖声，人的脚步声……编织成热闹而又吉祥的</HeadLine>
                                <HeadLine $h={52} $w={389}>交响乐。新年的脚步近了，年味儿越来越浓。</HeadLine>
                                {BODY.map((line, i) => (
                                    <BodyLine key={i} $first={line.first} $end={line.end}>{withRed(line.t)}</BodyLine>
                                ))}
                            </Sheet>
                        </Canvas>
                    </EditorBody>
                </Editor>

                <ScrollCol>
                    <ScrollTop />
                    <ScrollArrow $up $m="13px 3px 0 0" />
                    <ScrollThumb />
                    <ScrollArrow $m="431px 3px 0 0" />
                    <ScrollArrow $m="48px 3px 0 0" />
                    <ScrollArrow $m="1px 3px 0 0" />
                </ScrollCol>

                <Panel>
                    <PanelHead>
                        <span>样式和格式<Caret /></span>
                        <PanelClose size={14} strokeWidth={1} />
                    </PanelHead>
                    <StyleSelect>
                        <StyleName $size={20}>标题  2</StyleName>
                        <BigCaret />
                    </StyleSelect>
                    <PanelButtons>
                        <PanelButton>新样式...</PanelButton>
                        <PanelButton>清除格式</PanelButton>
                    </PanelButtons>
                    <PanelLabel>请选择要应用的格式</PanelLabel>
                    <StyleList>
                        {STYLES.map(s => (
                            <StyleRow key={s.name} $selected={s.selected}>
                                <StyleName $size={s.size} $plain={s.plain} $ls={s.ls}>{s.name}</StyleName>
                                <EnterMark>
                                    {s.char ? <CharMark>a</CharMark> : <CornerDownLeft size={13} strokeWidth={1.4} />}
                                </EnterMark>
                            </StyleRow>
                        ))}
                    </StyleList>
                    <FilterSelect>显示: 有效样式</FilterSelect>
                </Panel>

                <Rail>
                    <RailGrip />
                    <RailButton $active><HighlightIcon /></RailButton>
                    {RAIL_ICONS.map((icon, i) => <RailButton key={i}>{icon}</RailButton>)}
                    <RailSep />
                    <RailDots><i /><i /><i /></RailDots>
                </Rail>
            </Workspace>

            <StatusBar>
                <StatusItem $w={52} $pl={9}>页码: 1</StatusItem>
                <StatusItem $w={65}>页面: 1/2</StatusItem>
                <StatusItem $w={151} $gap={16}><span>节: 1/1</span><span>设置值: 2.9厘米</span></StatusItem>
                <StatusItem $w={85} $gap={14}><span>行: 1</span><span>列: 1</span></StatusItem>
                <StatusItem $w={93}>字数: 108/893</StatusItem>
                <StatusItem $w={87} $gap={4}><BookX size={14} strokeWidth={1.1} />文档校对</StatusItem>
                <StatusItem $w={80} $pl={13} $gap={5} $bare><ShieldCheck size={15} strokeWidth={1} />未认证</StatusItem>
                <ViewButtons>
                    <ViewButton><Expand size={15} strokeWidth={1.2} /></ViewButton>
                    <ViewButton><BookOpen size={16} strokeWidth={1.1} /></ViewButton>
                    <ViewButton $active><FileText size={16} strokeWidth={1.2} /></ViewButton>
                    <ViewButton><AlignLeft size={15} strokeWidth={1.1} /></ViewButton>
                    <ViewButton><Globe size={15} strokeWidth={1.1} /></ViewButton>
                    <ViewButton><Eye size={16} strokeWidth={1.1} /></ViewButton>
                </ViewButtons>
            </StatusBar>

            <Arrow width="145" height="55" viewBox="0 0 145 55">
                <defs>
                    <filter id="arrow-shadow" x="-10%" y="-30%" width="120%" height="170%">
                        <feDropShadow dx="0" dy="1.500" stdDeviation="1.200" floodColor="#000" floodOpacity=".35" />
                    </filter>
                </defs>
                <path d="M10 44L114 14 111 7 134 9 115 22 113.500 18 11 46z" fill="#f01010" filter="url(#arrow-shadow)" />
            </Arrow>

            <Watermark>
                <WatermarkText>
                    <WatermarkTitle>电脑技术网</WatermarkTitle>
                    <WatermarkUrl>www.tagxp.com</WatermarkUrl>
                </WatermarkText>
                <TagBadge>
                    <TagGhost $t={43} $size={21}>极光下载站</TagGhost>
                    <TagGhost $t={67} $size={15}>www.xz7.com</TagGhost>
                    <TagWord>TAG</TagWord>
                </TagBadge>
            </Watermark>
        </Page>
    )
}

export default App
